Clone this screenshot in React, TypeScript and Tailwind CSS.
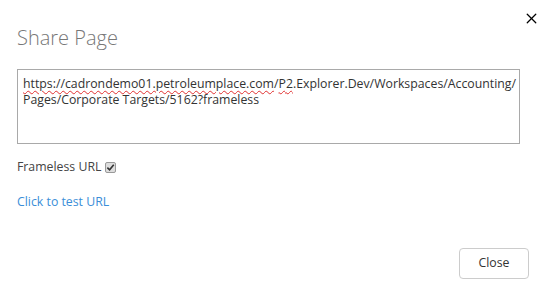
import { X } from 'lucide-react';

export default function App() {
  const font = { fontFamily: '"Open Sans", "Noto Sans", sans-serif' };
  return (
    <div className="relative h-[294px] w-[549px] bg-white text-[#333]" style={font}>
      <button type="button" className="absolute right-[9px] top-[10px] text-black">
        <X size={17} strokeWidth={1.8} />
      </button>
      <div className="px-[17px] pt-[25px]">
        <h1 className="text-[20px] font-light leading-[26px] text-[#777]">Share Page</h1>
        <div className="mt-[18px] h-[75px] w-[503px] border border-[#a9a9a9] px-[5px] pt-[6px] text-[12.3px] leading-[16px] text-[#333]">
          <span className="underline decoration-wavy decoration-[#e03030] decoration-1 underline-offset-2">
            https://cadrondemo01.petroleumplace.com
          </span>
          /
          <span className="underline decoration-wavy decoration-[#e03030] decoration-1 underline-offset-2">P2</span>
          .Explorer.Dev/Workspaces/Accounting/
          <br />
          Pages/Corporate Targets/5162?frameless
        </div>
        <label className="mt-[15px] flex items-center gap-[4px] text-[12.3px] leading-[16px] text-[#444]">
          Frameless URL
          <span className="flex h-[11px] w-[11px] items-center justify-center rounded-[2px] border border-[#999] bg-[#ddd]">
            <svg viewBox="0 0 10 10" className="h-[9px] w-[9px]">
              <path d="M1.5 5.2 L4 7.6 L8.6 2" fill="none" stroke="#333" strokeWidth="1.8" />
            </svg>
          </span>
        </label>
        <a className="mt-[19px] block text-[12.3px] leading-[16px] text-[#3b8ed8]" href="#">
          Click to test URL
        </a>
      </div>
      <div className="absolute bottom-[15px] right-[20px]">
        <button
          type="button"
          className="h-[31px] w-[70px] rounded-[4px] border border-[#ccc] bg-white text-[12.3px] text-[#333]"
        >
          Close
        </button>
      </div>
    </div>
  );
}
